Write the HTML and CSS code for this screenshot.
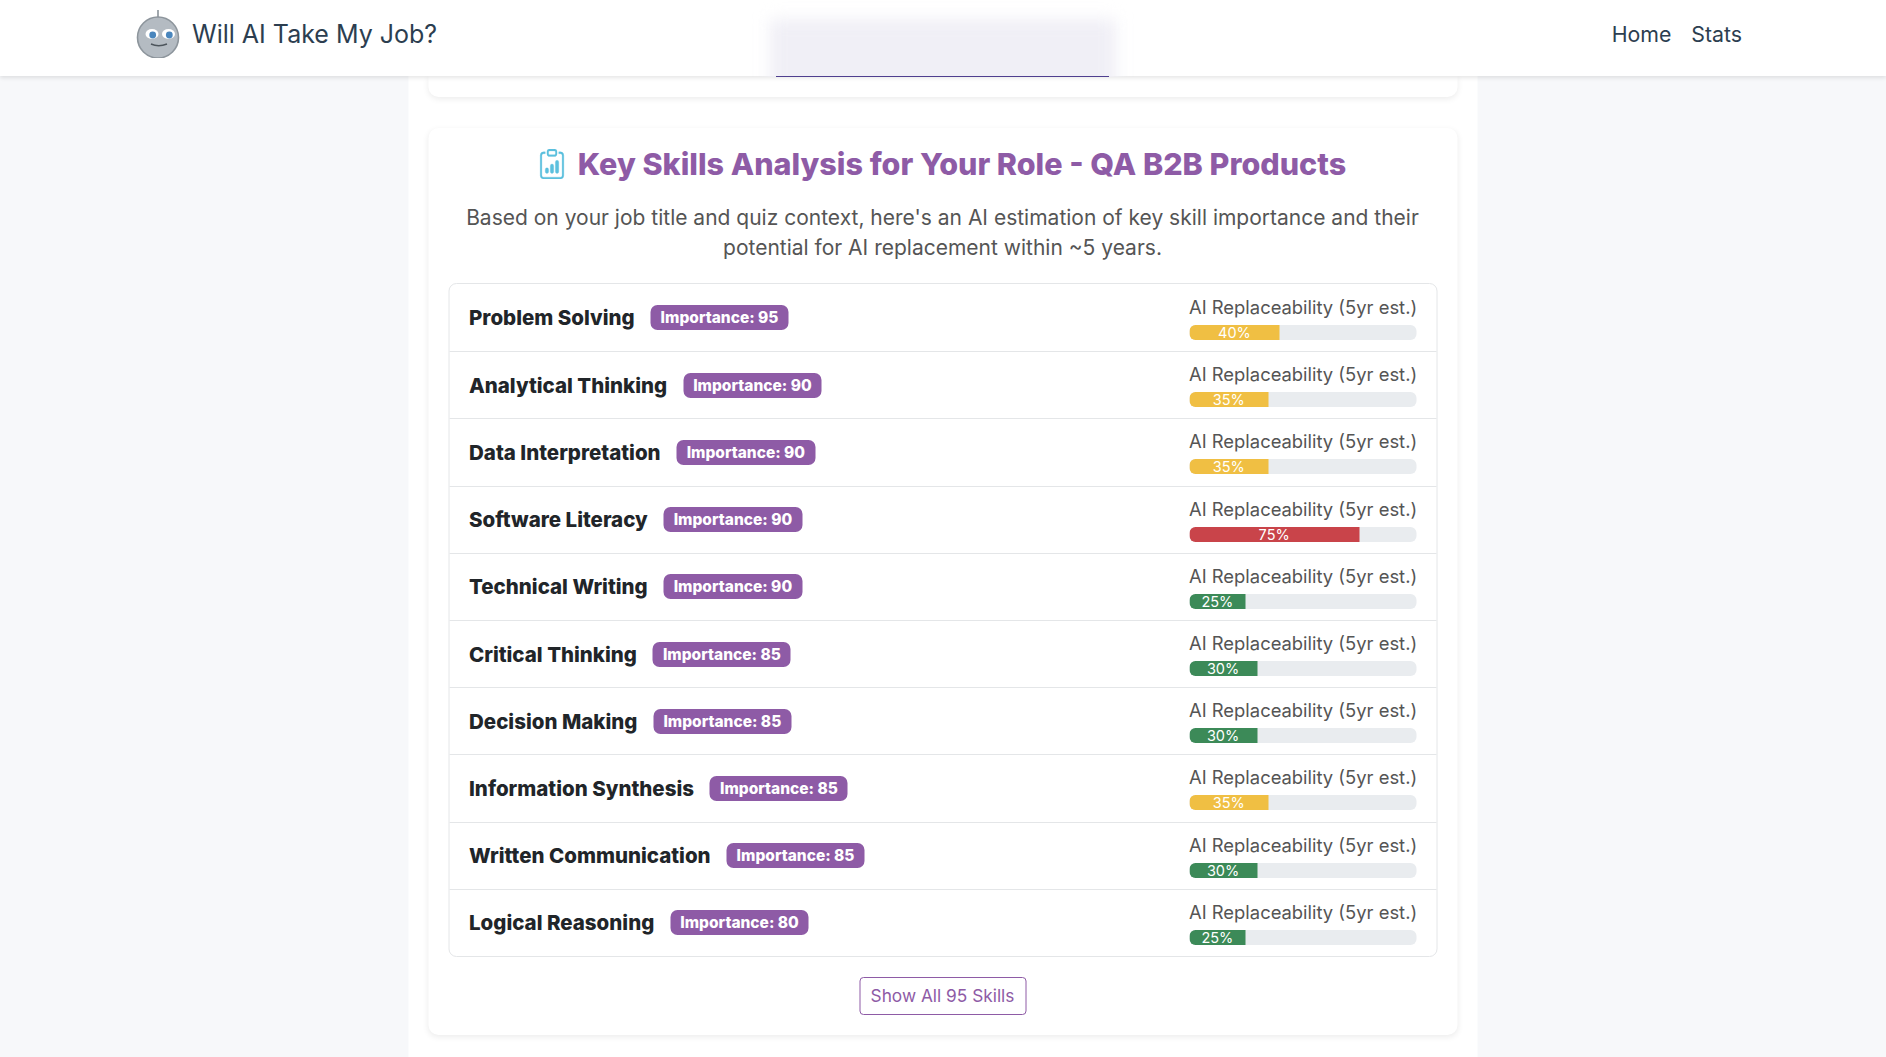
FILE: index.html
```html
<!DOCTYPE html>
<html lang="en">
<head>
    <meta charset="UTF-8">
    <title>Will AI Take My Job?</title>
    <link rel="stylesheet" href="styles.css">
</head>
<body>
    <nav class="navbar">
        <a class="brand" href="#">
            <svg class="brand-logo" width="44" height="48" viewBox="0 0 44 48">
                <line x1="22" y1="0" x2="22" y2="7" stroke="#8a9299" stroke-width="1.6"/>
                <circle cx="22" cy="27.5" r="20.5" fill="#b4bbc2" stroke="#8d959c" stroke-width="1.6"/>
                <ellipse cx="16" cy="24" rx="6.5" ry="5" fill="#fff"/>
                <ellipse cx="32.5" cy="24" rx="6.5" ry="5" fill="#fff"/>
                <circle cx="16.7" cy="25" r="3.4" fill="#4a86bd"/>
                <circle cx="33.3" cy="25" r="3.4" fill="#4a86bd"/>
                <path d="M15 34 Q22.5 37.5 31 34" fill="none" stroke="#4d555c" stroke-width="1.4"/>
            </svg>
            Will AI Take My Job?
        </a>
        <div class="nav-links">
            <a href="#">Home</a>
            <a href="#">Stats</a>
        </div>
    </nav>

    <div class="blur-toast"></div>

    <main class="container">
        <div class="card card-top"></div>

        <section class="card skills-card">
            <h2 class="skills-title">
                <svg class="title-icon" width="27" height="30" viewBox="0 0 16 16" fill="#5bc0de" stroke="#5bc0de" stroke-width="0.15" preserveAspectRatio="none">
                    <path d="M4 11a1 1 0 1 1 2 0v1a1 1 0 1 1-2 0v-1zm6-4a1 1 0 1 1 2 0v5a1 1 0 1 1-2 0V7zM7 9a1 1 0 0 1 2 0v3a1 1 0 1 1-2 0V9z"/>
                    <path d="M4 1.5H3a2 2 0 0 0-2 2V14a2 2 0 0 0 2 2h10a2 2 0 0 0 2-2V3.5a2 2 0 0 0-2-2h-1v1h1a1 1 0 0 1 1 1V14a1 1 0 0 1-1 1H3a1 1 0 0 1-1-1V3.5a1 1 0 0 1 1-1h1v-1z"/>
                    <path d="M9.5 1a.5.5 0 0 1 .5.5v1a.5.5 0 0 1-.5.5h-3a.5.5 0 0 1-.5-.5v-1a.5.5 0 0 1 .5-.5h3zm-3-1A1.5 1.5 0 0 0 5 1.5v1A1.5 1.5 0 0 0 6.5 4h3A1.5 1.5 0 0 0 11 2.5v-1A1.5 1.5 0 0 0 9.5 0h-3z"/>
                </svg>
                Key Skills Analysis for Your Role - QA B2B Products
            </h2>
            <p class="skills-desc">Based on your job title and quiz context, here's an AI estimation of key skill importance and their potential for AI replacement within ~5 years.</p>

            <ul class="skill-list">
                <li class="skill-row">
                    <div class="skill-info"><span class="skill-name">Problem Solving</span><span class="badge">Importance: 95</span></div>
                    <div class="skill-ai"><div class="ai-label">AI Replaceability (5yr est.)</div><div class="progress"><div class="bar bar-yellow" style="width: 40%">40%</div></div></div>
                </li>
                <li class="skill-row">
                    <div class="skill-info"><span class="skill-name">Analytical Thinking</span><span class="badge">Importance: 90</span></div>
                    <div class="skill-ai"><div class="ai-label">AI Replaceability (5yr est.)</div><div class="progress"><div class="bar bar-yellow" style="width: 35%">35%</div></div></div>
                </li>
                <li class="skill-row">
                    <div class="skill-info"><span class="skill-name">Data Interpretation</span><span class="badge">Importance: 90</span></div>
                    <div class="skill-ai"><div class="ai-label">AI Replaceability (5yr est.)</div><div class="progress"><div class="bar bar-yellow" style="width: 35%">35%</div></div></div>
                </li>
                <li class="skill-row">
                    <div class="skill-info"><span class="skill-name">Software Literacy</span><span class="badge">Importance: 90</span></div>
                    <div class="skill-ai"><div class="ai-label">AI Replaceability (5yr est.)</div><div class="progress"><div class="bar bar-red" style="width: 75%">75%</div></div></div>
                </li>
                <li class="skill-row">
                    <div class="skill-info"><span class="skill-name">Technical Writing</span><span class="badge">Importance: 90</span></div>
                    <div class="skill-ai"><div class="ai-label">AI Replaceability (5yr est.)</div><div class="progress"><div class="bar bar-green" style="width: 25%">25%</div></div></div>
                </li>
                <li class="skill-row">
                    <div class="skill-info"><span class="skill-name">Critical Thinking</span><span class="badge">Importance: 85</span></div>
                    <div class="skill-ai"><div class="ai-label">AI Replaceability (5yr est.)</div><div class="progress"><div class="bar bar-green" style="width: 30%">30%</div></div></div>
                </li>
                <li class="skill-row">
                    <div class="skill-info"><span class="skill-name">Decision Making</span><span class="badge">Importance: 85</span></div>
                    <div class="skill-ai"><div class="ai-label">AI Replaceability (5yr est.)</div><div class="progress"><div class="bar bar-green" style="width: 30%">30%</div></div></div>
                </li>
                <li class="skill-row">
                    <div class="skill-info"><span class="skill-name">Information Synthesis</span><span class="badge">Importance: 85</span></div>
                    <div class="skill-ai"><div class="ai-label">AI Replaceability (5yr est.)</div><div class="progress"><div class="bar bar-yellow" style="width: 35%">35%</div></div></div>
                </li>
                <li class="skill-row">
                    <div class="skill-info"><span class="skill-name">Written Communication</span><span class="badge">Importance: 85</span></div>
                    <div class="skill-ai"><div class="ai-label">AI Replaceability (5yr est.)</div><div class="progress"><div class="bar bar-green" style="width: 30%">30%</div></div></div>
                </li>
                <li class="skill-row">
                    <div class="skill-info"><span class="skill-name">Logical Reasoning</span><span class="badge">Importance: 80</span></div>
                    <div class="skill-ai"><div class="ai-label">AI Replaceability (5yr est.)</div><div class="progress"><div class="bar bar-green" style="width: 25%">25%</div></div></div>
                </li>
            </ul>

            <div class="show-all">
                <button class="show-all-btn">Show All 95 Skills</button>
            </div>
        </section>
    </main>
</body>
</html>
```

FILE: styles.css
```css
* {
    box-sizing: border-box;
    margin: 0;
    padding: 0;
}

html, body {
    height: 100%;
    overflow: hidden;
}

body {
    font-family: 'Inter', 'Liberation Sans', sans-serif;
    background-color: #f7f8fa;
    color: #555;
}

a {
    text-decoration: none;
}

.navbar {
    position: relative;
    z-index: 10;
    height: 76px;
    padding: 0 144px 8px 136px;
    display: flex;
    align-items: center;
    justify-content: space-between;
    background-color: #fff;
    box-shadow: 0 2px 4px rgba(0,0,0,0.1);
}

.brand {
    display: flex;
    align-items: center;
    gap: 12px;
    font-size: 25px;
    color: #2c3e50;
}

.nav-links {
    display: flex;
    gap: 20px;
}

.nav-links a {
    font-size: 21.3px;
    color: #2c3e50;
}

/* clipped at the navbar edge, only the fill is blurred */
.blur-toast {
    position: absolute;
    z-index: 11;
    left: 740px;
    top: 0;
    width: 400px;
    height: 77px;
    overflow: hidden;
}

.blur-toast::before {
    content: "";
    position: absolute;
    left: 30px;
    right: 24px;
    top: 19px;
    bottom: -30px;
    background-color: #f0eff6;
    filter: blur(8px);
}

.blur-toast::after {
    content: "";
    position: absolute;
    left: 36px;
    right: 31px;
    bottom: 0;
    height: 1px;
    background-color: #4f3f8f;
}

.container {
    width: 1069px;
    margin: 0 auto;
    padding: 0 20px;
    height: 981px;
    background-color: #fff;
    transform: translateX(-0.5px);
}

.card {
    background-color: #fff;
    border-radius: 10px;
    box-shadow: 0 2px 6px rgba(0,0,0,0.08);
}

.card-top {
    height: 21px;
    margin-bottom: 31px;
    border-radius: 0 0 10px 10px;
}

.skills-card {
    height: 907px;
    padding: 17px 20px 0;
}

.skills-title {
    display: flex;
    align-items: center;
    justify-content: center;
    gap: 12px;
    font-size: 30.5px;
    line-height: 38px;
    font-weight: 800;
    color: #8e5ba6;
    margin-bottom: 20px;
}

.skills-desc {
    font-size: 21px;
    line-height: 30px;
    text-align: center;
    color: #555;
    padding: 0 16px;
    margin-bottom: 20px;
}

.skill-list {
    list-style: none;
    border: 1px solid #e4e6e8;
    border-radius: 8px;
}

.skill-row {
    height: 67.2px;
    padding: 0 20px;
    display: flex;
    align-items: center;
    justify-content: space-between;
    border-top: 1px solid #e4e6e8;
}

.skill-row:first-child {
    border-top: none;
}

.skill-info {
    display: flex;
    align-items: center;
    gap: 16px;
}

.skill-name {
    font-size: 20.5px;
    font-weight: 800;
    color: #212529;
}

.badge {
    padding: 0 10px;
    height: 25px;
    line-height: 25px;
    border-radius: 7px;
    background-color: #8e5ba6;
    color: #fff;
    font-size: 15.5px;
    font-weight: 800;
}

.skill-ai {
    width: 227px;
    padding-bottom: 2px;
}

.ai-label {
    font-size: 18.4px;
    line-height: 27px;
    margin-bottom: 4px;
    white-space: nowrap;
    color: #555;
}

.progress {
    height: 15px;
    border-radius: 6px;
    background-color: #e9ecef;
    overflow: hidden;
}

.bar {
    height: 100%;
    font-size: 14.5px;
    line-height: 15px;
    text-align: center;
    color: #fff;
}

.bar-yellow {
    background-color: #f0bf43;
}

.bar-red {
    background-color: #c9444a;
}

.bar-green {
    background-color: #3c8a58;
}

.show-all {
    margin-top: 20px;
    text-align: center;
}

.show-all-btn {
    width: 167px;
    height: 38px;
    font-family: inherit;
    font-size: 17.3px;
    color: #8e5ba6;
    background-color: #fff;
    border: 1px solid #8e5ba6;
    border-radius: 4px;
}
```
